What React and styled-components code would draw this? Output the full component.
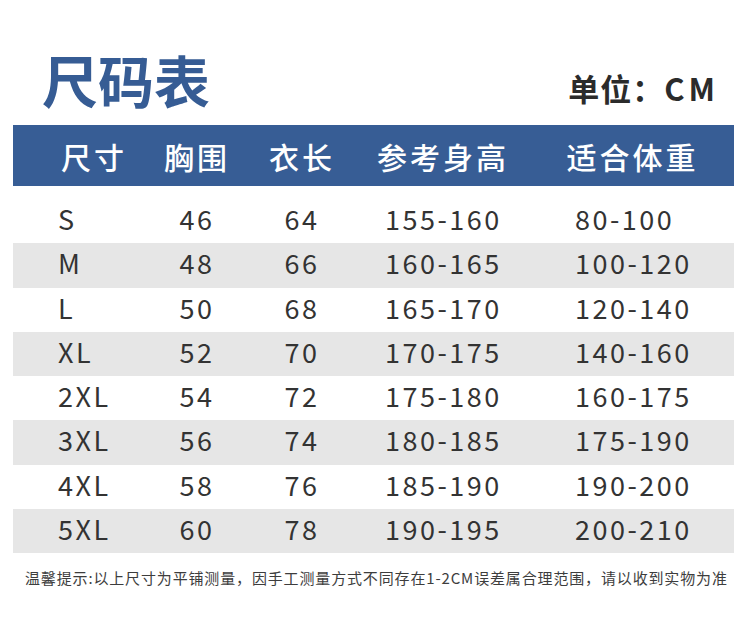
import styled, { createGlobalStyle } from "styled-components";

const GlobalStyle = createGlobalStyle`
  body {
    margin: 0;
    background: #fff;
    font-family: "Noto Sans CJK SC", "Noto Sans", sans-serif;
  }
`;

const Page = styled.div`
  width: 750px;
  height: 621px;
  padding: 0 16px 0 13px;
  box-sizing: border-box;
  background: #fff;
`;

const Top = styled.div`
  height: 125px;
  display: flex;
  justify-content: space-between;
  align-items: flex-start;
`;

const Title = styled.h1`
  margin: 51px 0 0 29px;
  font-size: 56px;
  line-height: 1;
  font-weight: 700;
  color: #365c94;
`;

const Unit = styled.div`
  margin: 72px 15px 0 0;
  font-size: 31px;
  line-height: 1;
  font-weight: 700;
  color: #2b2b2b;
  letter-spacing: 1px;
`;

const Latin = styled.span`
  letter-spacing: 4px;
`;

const Table = styled.div`
  display: grid;
  grid-template-columns: 132px 104px 106px 176px 1fr;
`;

const HeadRow = styled.div`
  display: contents;
`;

const HeadCell = styled.div`
  height: 61px;
  margin-bottom: 13px;
  background: #375d95;
  color: #fff;
  font-size: 30px;
  font-weight: 500;
  letter-spacing: 3px;
  display: flex;
  align-items: center;
  justify-content: ${({ $left }) => ($left ? "flex-start" : "center")};
  padding-left: ${({ $left }) => ($left ? "48px" : "0")};
`;

const Cell = styled.div`
  height: 44.25px;
  box-sizing: border-box;
  padding-bottom: 5px;
  background: ${({ $shade }) => ($shade ? "#e6e6e6" : "#fff")};
  color: #333;
  font-size: 27px;
  letter-spacing: 2.5px;
  display: flex;
  align-items: center;
  justify-content: ${({ $indent }) => ($indent != null ? "flex-start" : "center")};
  padding-left: ${({ $indent }) => ($indent != null ? $indent + "px" : "0")};
`;

const Note = styled.p`
  margin: 14px 0 0 12px;
  font-size: 15px;
  letter-spacing: 0.85px;
  color: #3d3d3d;
  white-space: nowrap;
`;

const heads = ["尺寸", "胸围", "衣长", "参考身高", "适合体重"];

// left offset of each column's values; null = centred
const indents = [45, null, null, 30, 44];

const rows = [
  ["S", "46", "64", "155-160", "80-100"],
  ["M", "48", "66", "160-165", "100-120"],
  ["L", "50", "68", "165-170", "120-140"],
  ["XL", "52", "70", "170-175", "140-160"],
  ["2XL", "54", "72", "175-180", "160-175"],
  ["3XL", "56", "74", "180-185", "175-190"],
  ["4XL", "58", "76", "185-190", "190-200"],
  ["5XL", "60", "78", "190-195", "200-210"],
];

export default function App() {
  return (
    <>
      <GlobalStyle />
      <Page>
        <Top>
          <Title>尺码表</Title>
          <Unit>
            单位：<Latin>CM</Latin>
          </Unit>
        </Top>
        <Table>
          <HeadRow>
            {heads.map((h, i) => (
              <HeadCell key={h} $left={i === 0}>
                {h}
              </HeadCell>
            ))}
          </HeadRow>
          {rows.map((r, ri) =>
            r.map((v, ci) => (
              <Cell key={ri + "-" + ci} $indent={indents[ci]} $shade={ri % 2 === 1}>
                {v}
              </Cell>
            ))
          )}
        </Table>
        <Note>
          温馨提示:以上尺寸为平铺测量，因手工测量方式不同存在1-2CM误差属合理范围，请以收到实物为准
        </Note>
      </Page>
    </>
  );
}
